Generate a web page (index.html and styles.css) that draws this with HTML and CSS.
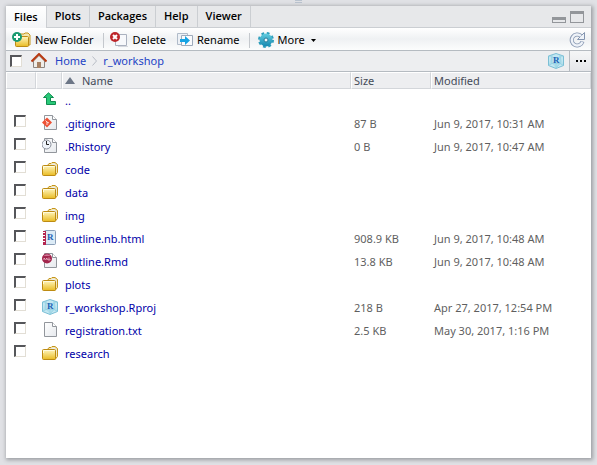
FILE: index.html
```html
<!DOCTYPE html>
<html lang="en">
<head>
<meta charset="utf-8">
<title>Files</title>
<link rel="stylesheet" href="styles.css">
</head>
<body>
<svg class="defs" aria-hidden="true">
  <defs>
    <linearGradient id="gold" x1="0" y1="0" x2="0" y2="1"><stop offset="0" stop-color="#fff6bf"/><stop offset="1" stop-color="#e9bb22"/></linearGradient>
    <linearGradient id="paper" x1="0" y1="0" x2="1" y2="1"><stop offset="0" stop-color="#fff"/><stop offset="1" stop-color="#e6e9ed"/></linearGradient>
    <linearGradient id="teal" x1="0" y1="0" x2="0" y2="1"><stop offset="0" stop-color="#62cde0"/><stop offset="1" stop-color="#1688b0"/></linearGradient>
    <symbol id="folder" viewBox="0 0 16 16">
      <path d="M5.500 4.500 7 2.500H9L10 1.500H13L15.500 3.500V11.500L13 14.500H5.500Z" fill="#f2e5b0" stroke="#c5951b"/>
      <path d="M8 4 12 2.500 14.500 4.500V8H8Z" fill="#e8ebf3"/>
      <rect x=".5" y="4.500" width="13" height="10" rx="1" fill="url(#gold)" stroke="#bd8b13"/>
      <path d="M1.500 8V5.500H12.500" fill="none" stroke="#fffbdc"/>
    </symbol>
    <symbol id="page" viewBox="0 0 16 16">
      <path d="M2.500 .5H10.500L14.500 4.500V14.500H2.500Z" fill="url(#paper)" stroke="#92969c"/>
      <path d="M10.500 .5V4.500H14.500" fill="#fff" stroke="#92969c"/>
    </symbol>
    <symbol id="git" viewBox="0 0 16 16">
      <path d="M2.500 .5H10.500L14.500 4.500V14.500H2.500Z" fill="url(#paper)" stroke="#92969c"/>
      <path d="M10.500 .5V4.500H14.500" fill="#fff" stroke="#92969c"/>
      <path d="M5 2.500 10 7.500 5 12.500 0 7.500Z" fill="#ee5135"/>
      <path d="M3.500 5.500 5 7V10M5 7 7 8" fill="none" stroke="#fff" stroke-width=".8"/>
    </symbol>
    <symbol id="history" viewBox="0 0 16 16">
      <path d="M2.500 .5H10.500L14.500 4.500V14.500H2.500Z" fill="url(#paper)" stroke="#92969c"/>
      <path d="M10.500 .5V4.500H14.500" fill="#fff" stroke="#92969c"/>
      <circle cx="4.500" cy="6.500" r="4.500" fill="#eef3fa" stroke="#8a8f9a"/>
      <path d="M4.500 3V6.500H7" fill="none" stroke="#222"/>
    </symbol>
    <symbol id="notebook" viewBox="0 0 16 16">
      <rect x="2.500" y=".5" width="11" height="14" rx="1" fill="#dcebf6" stroke="#8b9fb8"/>
      <path d="M1 1H4V15H1Z" fill="#b52650"/>
      <path d="M0 2.500H3M0 5.500H3M0 8.500H3M0 11.500H3" stroke="#fff"/>
      <text x="5" y="10" class="glyph">R</text>
    </symbol>
    <symbol id="rmd" viewBox="0 0 16 16">
      <path d="M2.500 .5H10.500L14.500 4.500V14.500H2.500Z" fill="url(#paper)" stroke="#92969c"/>
      <path d="M10.500 .5V4.500H14.500" fill="#fff" stroke="#92969c"/>
      <circle cx="5" cy="5.500" r="5" fill="#a3264d"/>
      <path d="M1.500 3Q5 -.5 8.500 3Z" fill="#cf7896"/>
      <path d="M2 7V5L3.500 6.500 5 5V7M7 4.500V7M5.500 6 7 7.500 8.500 6" fill="none" stroke="#f0c3d1" stroke-width=".8"/>
    </symbol>
    <symbol id="rproj" viewBox="0 0 16 16">
      <path d="M.5 3 8 .5 15.500 3V12.500L8 15.500 .5 12.500Z" fill="#c3e7f2" stroke="#7bbfd5"/>
      <path d="M.5 12.500 4 10.500V2M15.500 12.500 12 10.500V2M4 10.500H12L8 15" fill="#9bd5e6" fill-opacity=".5" stroke="#8accdf" stroke-width=".7"/>
      <path d="M.5 3 8 5.500 15.500 3M8 5.500V15.500" fill="none" stroke="#93d1e2" stroke-width=".7"/>
      <text x="5" y="10" class="glyph">R</text>
    </symbol>
    <symbol id="up" viewBox="0 0 16 16">
      <path d="M6.500 .8 11.500 5.500H8.500V9.500H13.500V12.500H4.500V5.500H1.500Z" fill="#29c878" stroke="#108d50"/>
    </symbol>
  </defs>
</svg>

<div class="grip"></div>
<main class="panel">
  <div class="tabs">
    <button class="tab active">Files</button><button class="tab">Plots</button><button class="tab">Packages</button><button class="tab">Help</button><button class="tab">Viewer</button>
    <div class="window-buttons">
      <button class="minimize" aria-label="Minimize"></button>
      <button class="maximize" aria-label="Maximize"></button>
    </div>
  </div>

  <div class="toolbar">
    <button class="tool"><svg class="wide-icon" viewBox="0 0 19 16"><path d="M6 5 8 2H12L13 1H16L18 3V13H6Z" fill="#f2e5b0" stroke="#c5951b"/><rect x="3.500" y="4.500" width="13" height="10" rx="1" fill="url(#gold)" stroke="#bd8b13"/><circle cx="5" cy="5" r="5" fill="#189a70"/><path d="M5 2V8M2 5H8" stroke="#fff" stroke-width="2"/></svg>New Folder</button>
    <span class="separator"></span>
    <button class="tool"><svg class="wide-icon" viewBox="0 0 19 16"><path d="M5.500 2.500H16.500V13.500H5.500Z" fill="#f7f8fb" stroke="#aab1bf"/><path d="M8 14.500H18" stroke="#d5d8de"/><circle cx="5" cy="5" r="5" fill="#bd2529"/><path d="M3 3 7 7M7 3 3 7" stroke="#fff" stroke-width="2"/></svg>Delete</button>
    <button class="tool"><svg class="icon" viewBox="0 0 16 16"><path d="M.5 1.500H10.500V12.500H.5Z" fill="#edf1f6" stroke="#b0bbc9"/><path d="M4.500 3.500H15.500V13.500H4.500Z" fill="#fafbfd" stroke="#9daabb"/><path d="M3 7H8V4L13 8.500 8 13V10H3Z" fill="#16a3e3"/></svg>Rename</button>
    <span class="separator"></span>
    <button class="tool more"><svg class="icon" viewBox="0 0 16 16"><circle cx="8" cy="8" r="6.500" fill="none" stroke="#2c9dbb" stroke-width="3" stroke-dasharray="2.600 2.500"/><circle cx="8" cy="8" r="6.500" fill="url(#teal)"/><circle cx="8" cy="8" r="2" fill="#f1f9fb" stroke="#277c9b"/></svg>More<svg class="caret" viewBox="0 0 5 3"><path d="M0 0H5L2.500 3Z"/></svg></button>
    <button class="refresh" aria-label="Refresh"><svg class="icon" viewBox="0 0 16 16"><path d="M12 4A5.500 5.500 0 1 0 13.500 9.500" fill="none" stroke="#8394af" stroke-width="4"/><path d="M15.500 .5V7.500H8.500Z" fill="#eef2f8" stroke="#8394af"/><path d="M12 4A5.500 5.500 0 1 0 13.400 10" fill="none" stroke="#eef2f8" stroke-width="2.400"/></svg></button>
  </div>

  <nav class="path">
    <input type="checkbox" class="check" aria-label="Select all files">
    <svg class="home" viewBox="0 0 16 16"><path d="M2.500 8 8 2.500 13.500 8V14.500H2.500Z" fill="#f0ede8" stroke="#8c8681"/><path d="M6 9H10V15H6Z" fill="#a78163"/><path d="M.5 8.500 8 1 15.500 8.500" fill="none" stroke="#b83a12" stroke-width="2"/></svg>
    <a href="#">Home</a>
    <svg class="chevron" viewBox="0 0 5 10"><path d="M.5 .5 4.500 5 .5 9.500" fill="none" stroke="#b8bdc5"/></svg>
    <a href="#">r_workshop</a>
    <svg class="icon project"><use href="#rproj"/></svg>
    <button class="browse" aria-label="Go to directory"><svg viewBox="0 0 10 2"><path d="M0 0H2V2H0ZM4 0H6V2H4ZM8 0H10V2H8Z"/></svg></button>
  </nav>

  <table class="files">
    <colgroup><col class="col-check"><col class="col-icon"><col><col class="col-size"><col class="col-date"></colgroup>
    <thead>
      <tr><th></th><th></th><th><span class="sorted"><svg class="sort" viewBox="0 0 10 7"><path d="M5 0 10 7H0Z" fill="#6c7686"/></svg>Name</span></th><th>Size</th><th>Modified</th></tr>
    </thead>
    <tbody>
      <tr><td></td><td><svg class="icon"><use href="#up"/></svg></td><td><a href="#">..</a></td><td></td><td></td></tr>
      <tr><td><input type="checkbox" class="check" aria-label=".gitignore"></td><td><svg class="icon"><use href="#git"/></svg></td><td><a href="#">.gitignore</a></td><td>87 B</td><td>Jun 9, 2017, 10:31 AM</td></tr>
      <tr><td><input type="checkbox" class="check" aria-label=".Rhistory"></td><td><svg class="icon"><use href="#history"/></svg></td><td><a href="#">.Rhistory</a></td><td>0 B</td><td>Jun 9, 2017, 10:47 AM</td></tr>
      <tr><td><input type="checkbox" class="check" aria-label="code"></td><td><svg class="icon"><use href="#folder"/></svg></td><td><a href="#">code</a></td><td></td><td></td></tr>
      <tr><td><input type="checkbox" class="check" aria-label="data"></td><td><svg class="icon"><use href="#folder"/></svg></td><td><a href="#">data</a></td><td></td><td></td></tr>
      <tr><td><input type="checkbox" class="check" aria-label="img"></td><td><svg class="icon"><use href="#folder"/></svg></td><td><a href="#">img</a></td><td></td><td></td></tr>
      <tr><td><input type="checkbox" class="check" aria-label="outline.nb.html"></td><td><svg class="icon"><use href="#notebook"/></svg></td><td><a href="#">outline.nb.html</a></td><td>908.9 KB</td><td>Jun 9, 2017, 10:48 AM</td></tr>
      <tr><td><input type="checkbox" class="check" aria-label="outline.Rmd"></td><td><svg class="icon"><use href="#rmd"/></svg></td><td><a href="#">outline.Rmd</a></td><td>13.8 KB</td><td>Jun 9, 2017, 10:48 AM</td></tr>
      <tr><td><input type="checkbox" class="check" aria-label="plots"></td><td><svg class="icon"><use href="#folder"/></svg></td><td><a href="#">plots</a></td><td></td><td></td></tr>
      <tr><td><input type="checkbox" class="check" aria-label="r_workshop.Rproj"></td><td><svg class="icon"><use href="#rproj"/></svg></td><td><a href="#">r_workshop.Rproj</a></td><td>218 B</td><td>Apr 27, 2017, 12:54 PM</td></tr>
      <tr><td><input type="checkbox" class="check" aria-label="registration.txt"></td><td><svg class="icon"><use href="#page"/></svg></td><td><a href="#">registration.txt</a></td><td>2.5 KB</td><td>May 30, 2017, 1:16 PM</td></tr>
      <tr><td><input type="checkbox" class="check" aria-label="research"></td><td><svg class="icon"><use href="#folder"/></svg></td><td><a href="#">research</a></td><td></td><td></td></tr>
    </tbody>
  </table>
</main>
</body>
</html>
```
FILE: styles.css
```css
* { box-sizing: border-box; }

body {
  margin: 0;
  min-height: 100vh;
  padding: 0 6px 7px;
  display: flex;
  flex-direction: column;
  background: #e0e1e5;
  font: 11px/16px "Noto Sans", "Open Sans", sans-serif;
  color: #000;
}

.defs { position: absolute; width: 0; height: 0; }
svg { display: block; flex: none; }
.icon { width: 16px; height: 16px; }
.wide-icon { width: 19px; height: 16px; }
.glyph { font: bold 9px "Liberation Serif", serif; fill: #1d62b5; }

button {
  border: 0;
  padding: 0;
  background: none;
  font: inherit;
  color: inherit;
}

.grip {
  height: 3px;
  width: 7px;
  margin: 0 auto 3px;
  border-top: 1px solid #b9c3cf;
  border-bottom: 1px solid #b9c3cf;
}

.panel {
  flex: 1;
  background: #fff;
  box-shadow: 1px 1px 4px 1px #9a9da1;
}

.tabs {
  display: flex;
  height: 22px;
  background: #e7e8ea;
  border-bottom: 1px solid #cbced2;
}
.tab {
  padding: 0 8px 1px;
  font-family: "Open Sans", sans-serif;
  font-weight: 600;
  border-right: 1px solid #cbced2;
}
.tab.active {
  height: 22px;
  background: linear-gradient(#fff, #f4f5f7);
}
.window-buttons {
  display: flex;
  align-items: flex-end;
  gap: 4px;
  margin: 0 7px 4px auto;
}
.minimize, .maximize {
  width: 14px;
  border: 1px solid #93969a;
  border-top-width: 3px;
}
.minimize { height: 6px; }
.maximize { height: 12px; }

.toolbar {
  display: flex;
  align-items: center;
  height: 23px;
  padding: 2px 6px 0;
  background: linear-gradient(#fff, #eff1f3 50%, #fcfdfd);
  border-bottom: 1px solid #b5bbc1;
}
.tool { display: flex; align-items: center; gap: 4px; }
.tool + .tool { margin-left: 11px; }
.separator {
  width: 1px;
  height: 15px;
  margin: 0 6px 0 9px;
  background: #c4c8cd;
}
.more { margin-left: 2px; }
.caret { width: 5px; height: 3px; margin-left: 2px; }
.refresh { margin-left: auto; }

.path {
  display: flex;
  align-items: center;
  height: 21px;
  padding-left: 4px;
  background: #edeef0;
  border-bottom: 1px solid #b5bbc1;
}
.path a { color: #2343c5; text-decoration: none; }
.home { width: 16px; height: 16px; margin: 0 8px 0 9px; }
.chevron { width: 5px; height: 10px; margin: 0 6px; }
.project { margin-left: auto; }
.browse {
  align-self: stretch;
  display: flex;
  align-items: center;
  justify-content: center;
  width: 22px;
  margin-left: 5px;
  border-left: 1px solid #b5bbc1;
  background: linear-gradient(#f5f6f7, #e5e6e9);
}
.browse svg { width: 10px; height: 2px; }

.check {
  appearance: none;
  display: block;
  flex: none;
  width: 12px;
  height: 12px;
  margin: 0;
  background: #fff;
  border: 1px solid #e2ded5;
  border-top: 2px solid #55565a;
  border-left: 2px solid #55565a;
}

.files {
  width: 100%;
  table-layout: fixed;
  border-collapse: separate;
  border-spacing: 0;
}
.col-check { width: 30px; }
.col-icon { width: 26px; }
.col-size { width: 80px; }
.col-date { width: 160px; }
th {
  height: 17px;
  padding: 0 0 0 2px;
  border-left: 1px solid #fff;
  border-right: 1px solid #d3d6da;
  border-top: 1px solid #fff;
  border-bottom: 1px solid #d3d6da;
  background: #edeef0;
  color: #444b58;
  font-weight: normal;
  line-height: 15px;
  text-align: left;
}
.sorted { display: flex; align-items: center; gap: 7px; }
.sort { width: 10px; height: 7px; }
td {
  height: 23px;
  padding: 1px 0 0 3px;
  line-height: 16px;
  color: #5f5f5f;
}
td:first-child { padding: 0 0 5px 8px; }
td:nth-child(2) { padding: 0 0 2px 6px; }
td a { color: #0000a8; text-decoration: none; }
```
